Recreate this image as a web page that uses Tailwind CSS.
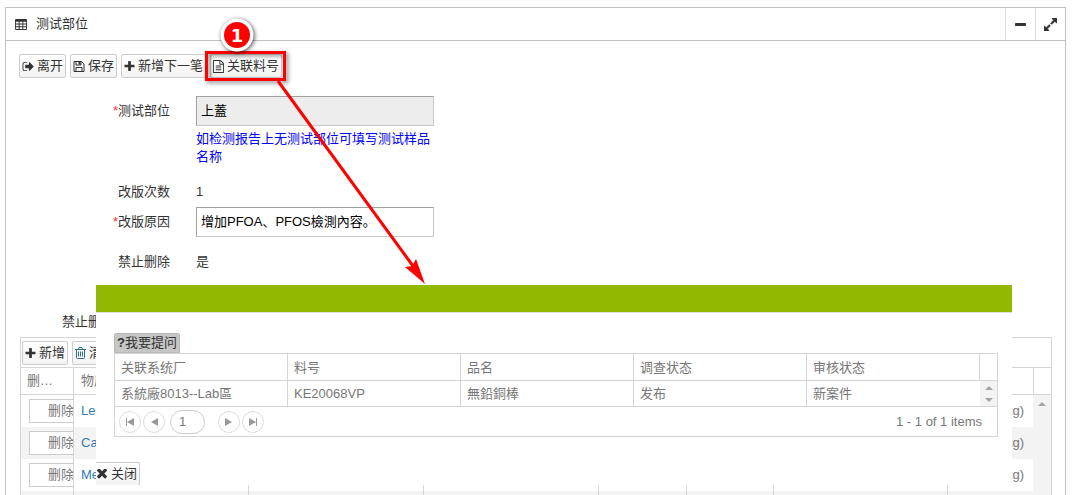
<!DOCTYPE html>
<html lang="zh-CN">
<head>
    <meta charset="UTF-8">
    <meta name="viewport" content="width=device-width, initial-scale=1.0">
    <title>测试部位</title>
    <script src="https://cdn.jsdelivr.net/npm/@tailwindcss/browser@4"></script>
</head>
<body class="bg-white font-['Liberation_Sans','Noto_Sans_CJK_SC',sans-serif] text-[13px] leading-[18px] text-[#333]">
    <!-- Icon set -->
    <svg class="hidden">
        <symbol id="i-table" viewBox="0 0 13 12"><path fill-rule="evenodd" d="M1 0h11q1 0 1 1v10q0 1-1 1H1q-1 0-1-1V1q0-1 1-1zM1 3v2h3V3zM5 3v2h3V3zM9 3v2h3V3zM1 6v2h3V6zM5 6v2h3V6zM9 6v2h3V6zM1 9v2h3V9zM5 9v2h3V9zM9 9v2h3V9z"/></symbol>
        <symbol id="i-exit" viewBox="0 128 1664 1536"><path d="M704 1440q0 4 1 20t.5 26.500-3 23.500-10 19.500-20.500 6.500h-320q-119 0-203.500-84.500t-84.500-203.500v-704q0-119 84.500-203.500t203.500-84.500h320q13 0 22.500 9.500t9.500 22.500q0 4 1 20t.5 26.500-3 23.500-10 19.500-20.500 6.500h-320q-66 0-113 47t-47 113v704q0 66 47 113t113 47h312l11.500 1 11.500 3 8 5.500 7 9 2 13.500zm928-544q0 26-19 45l-544 544q-19 19-45 19t-45-19-19-45v-288h-448q-26 0-45-19t-19-45v-384q0-26 19-45t45-19h448v-288q0-26 19-45t45-19 45 19l544 544q19 19 19 45z"/></symbol>
        <symbol id="i-save" viewBox="0 0 11 11"><path fill="none" stroke="currentColor" d="M.5 .5h7.500l2.500 2.500v7.500h-10zM2.500 10.500v-4h6v4M2.500 .5v3.500h5v-3.500"/><path d="M5 1h2v2.500H5z"/></symbol>
        <symbol id="i-plus" viewBox="192 128 1408 1408"><path d="M1600 736v192q0 40-28 68t-68 28h-416v416q0 40-28 68t-68 28h-192q-40 0-68-28t-28-68v-416h-416q-40 0-68-28t-28-68v-192q0-40 28-68t68-28h416v-416q0-40 28-68t68-28h192q40 0 68 28t28 68v416h416q40 0 68 28t28 68z"/></symbol>
        <symbol id="i-file" viewBox="128 0 1536 1792"><path d="M1596 380q28 28 48 76t20 88v1152q0 40-28 68t-68 28h-1344q-40 0-68-28t-28-68v-1600q0-40 28-68t68-28h896q40 0 88 20t76 48zm-444-244v376h376q-10-29-22-41l-313-313q-12-12-41-22zm384 1528v-1024h-416q-40 0-68-28t-28-68v-416h-768v1536h1280zm-1024-864q0-14 9-23t23-9h704q14 0 23 9t9 23v64q0 14-9 23t-23 9h-704q-14 0-23-9t-9-23v-64zm736 224q14 0 23 9t9 23v64q0 14-9 23t-23 9h-704q-14 0-23-9t-9-23v-64q0-14 9-23t23-9h704zm0 256q14 0 23 9t9 23v64q0 14-9 23t-23 9h-704q-14 0-23-9t-9-23v-64q0-14 9-23t23-9h704z"/></symbol>
        <symbol id="i-trash" viewBox="0 0 11 12"><path fill="none" stroke="currentColor" d="M0 2.500h11M3.500 2.500l.5-2h3l.5 2M1.500 2.500v8q0 1 1 1h6q1 0 1-1v-8M3.500 4.500v5M5.500 4.500v5M7.500 4.500v5"/></symbol>
        <symbol id="i-minus" viewBox="192 128 1408 1408"><path d="M1600 736v192q0 40-28 68t-68 28h-1216q-40 0-68-28t-28-68v-192q0-40 28-68t68-28h1216q40 0 68 28t28 68z"/></symbol>
        <symbol id="i-expand" viewBox="128 128 1536 1536"><path stroke="currentColor" stroke-width="60" d="M883 1056q0 13-10 23l-332 332 144 144q19 19 19 45t-19 45-45 19h-448q-26 0-45-19t-19-45v-448q0-26 19-45t45-19 45 19l144 144 332-332q10-10 23-10t23 10l114 114q10 10 10 23zm781-864v448q0 26-19 45t-45 19-45-19l-144-144-332 332q-10 10-23 10t-23-10l-114-114q-10-10-10-23t10-23l332-332-144-144q-19-19-19-45t19-45 45-19h448q26 0 45 19t19 45z"/></symbol>
        <symbol id="i-times" viewBox="302 434 1188 1188"><path d="M1490 1322q0 40-28 68l-136 136q-28 28-68 28t-68-28l-294-294-294 294q-28 28-68 28t-68-28l-136-136q-28-28-28-68t28-68l294-294-294-294q-28-28-28-68t28-68l136-136q28-28 68-28t68 28l294 294 294-294q28-28 68-28t68 28l136 136q28 28 28 68t-28 68l-294 294 294 294q28 28 28 68z"/></symbol>
    </svg>

    <div class="relative h-screen overflow-hidden pt-[7px] pr-1.5 pl-[5px]">
        <!-- Panel -->
        <main class="border border-[#c1c1c1]">
            <header class="flex h-[33px] items-center border-b border-[#c1c1c1] pl-[9px]">
                <svg class="h-[11px] w-3 fill-current"><use href="#i-table"/></svg>
                <h1 class="ml-[9px] flex-1">测试部位</h1>
                <button class="flex h-8 w-[30px] items-center justify-center border-l border-[#ddd]" aria-label="收起"><svg class="size-[11px] fill-current"><use href="#i-minus"/></svg></button>
                <button class="flex h-8 w-[30px] items-center justify-center border-l border-[#ddd]" aria-label="全屏"><svg class="size-[13px] fill-current"><use href="#i-expand"/></svg></button>
            </header>

            <!-- Toolbar -->
            <div class="flex gap-1 pt-[13px] pl-[13px]">
                <button class="flex h-6 items-center gap-[3px] rounded-xs border border-[#ccc] bg-linear-to-b from-white to-[#f3f3f3] px-[2px]"><svg class="h-[11px] w-3 fill-current"><use href="#i-exit"/></svg>离开</button>
                <button class="flex h-6 items-center gap-[3px] rounded-xs border border-[#ccc] bg-linear-to-b from-white to-[#f3f3f3] px-[2px]"><svg class="h-[11px] w-3 fill-current"><use href="#i-save"/></svg>保存</button>
                <button class="flex h-6 items-center gap-[3px] rounded-xs border border-[#ccc] bg-linear-to-b from-white to-[#f3f3f3] px-[2px]"><svg class="h-[10px] w-[11px] fill-current"><use href="#i-plus"/></svg>新增下一笔</button>
                <button class="flex h-6 items-center gap-[3px] rounded-xs border border-[#ccc] bg-linear-to-b from-white to-[#f3f3f3] px-[2px]"><svg class="h-[13px] w-[11px] fill-current"><use href="#i-file"/></svg>关联料号</button>
            </div>

            <!-- Form -->
            <form class="mt-[18px] grid grid-cols-[151px_238px] gap-x-[26px] pl-[13px]">
                <label for="part" class="text-right leading-[30px]"><span class="text-red-500">*</span>测试部位</label>
                <div class="h-[81px]">
                    <input id="part" type="text" value="上蓋" disabled class="h-[30px] w-full border border-[#c8c8c8] border-t-[#a0a0a0] border-l-[#a0a0a0] bg-[#ededed] px-1 pb-[3px] text-black">
                    <p class="mt-1 text-[#00f]">如检测报告上无测试部位可填写测试样品名称</p>
                </div>
                <span class="text-right leading-[30px]">改版次数</span>
                <span class="leading-[30px]">1</span>
                <label for="reason" class="text-right leading-[30px]"><span class="text-red-500">*</span>改版原因</label>
                <input id="reason" type="text" value="增加PFOA、PFOS檢測內容。" class="h-[30px] w-full border border-[#c8c8c8] border-t-[#a0a0a0] border-l-[#a0a0a0] px-1 pb-[3px] text-black">
                <span class="mt-[10px] text-right leading-[30px]">禁止删除</span>
                <span class="mt-[10px] leading-[30px]">是</span>
            </form>

            <!-- Substance grid -->
            <p class="mt-[30px] pl-14 leading-[30px]">禁止删除</p>
            <section class="mr-[13px] ml-[14px] border border-[#d5d5d5]">
                <div class="flex h-[29px] items-center gap-1 pl-px">
                    <button class="flex h-6 items-center gap-[3px] rounded-xs border border-[#ccc] bg-linear-to-b from-white to-[#f3f3f3] px-[2px]"><svg class="h-[10px] w-[11px] fill-current"><use href="#i-plus"/></svg>新增</button>
                    <button class="flex h-6 items-center gap-[3px] rounded-xs border border-[#ccc] bg-linear-to-b from-white to-[#f3f3f3] px-[2px]"><svg class="h-3 w-[11px] fill-current text-[#2e6d92]"><use href="#i-trash"/></svg>清空</button>
                </div>
                <div class="flex border-t border-[#d5d5d5]">
                    <div class="flex-1">
                        <table class="w-full table-fixed border-separate border-spacing-0 text-left text-[#777]">
                            <colgroup>
                                <col class="w-[52px]"><col class="w-[175px]"><col class="w-[175px]"><col class="w-[175px]"><col class="w-[88px]"><col class="w-[87px]"><col class="w-[174px]"><col>
                            </colgroup>
                            <thead>
                                <tr class="h-[27px] *:border-b *:border-l *:border-[#d5d5d5] *:px-[7px] *:font-normal *:first:border-l-0 *:first:px-[6px]">
                                    <th>删…</th><th>物质名称</th><th></th><th></th><th></th><th></th><th></th><th></th>
                                </tr>
                            </thead>
                            <tbody>
                                <tr class="h-8 *:border-l *:border-[#d5d5d5] *:first:border-l-0">
                                    <td class="overflow-hidden pl-2"><button class="block h-6 w-16 border border-[#ccc] bg-white text-center">删除</button></td>
                                    <td class="px-[7px]"><a href="#" class="text-[#337ab7]">Lead</a></td><td></td><td></td><td></td><td></td><td></td><td class="pr-[9px] text-right">(mg/kg)</td>
                                </tr>
                                <tr class="h-8 bg-[#f3f3f3] *:border-l *:border-[#d5d5d5] *:first:border-l-0">
                                    <td class="overflow-hidden pl-2"><button class="block h-6 w-16 border border-[#ccc] bg-white text-center">删除</button></td>
                                    <td class="px-[7px]"><a href="#" class="text-[#337ab7]">Cadmium</a></td><td></td><td></td><td></td><td></td><td></td><td class="pr-[9px] text-right">(mg/kg)</td>
                                </tr>
                                <tr class="h-8 *:border-l *:border-[#d5d5d5] *:first:border-l-0">
                                    <td class="overflow-hidden pl-2"><button class="block h-6 w-16 border border-[#ccc] bg-white text-center">删除</button></td>
                                    <td class="px-[7px]"><a href="#" class="text-[#337ab7]">Me</a></td><td></td><td></td><td></td><td></td><td></td><td class="pr-[9px] text-right">(mg/kg)</td>
                                </tr>
                                <tr class="h-8 bg-[#f3f3f3] *:border-l *:border-[#d5d5d5] *:first:border-l-0">
                                    <td></td><td></td><td></td><td></td><td></td><td></td><td></td><td></td>
                                </tr>
                            </tbody>
                        </table>
                    </div>
                    <div class="flex w-[18px] flex-col">
                        <div class="h-[27px] border-b border-l border-[#d5d5d5]"></div>
                        <div class="flex flex-1 justify-center bg-[#f3f3f3] pt-[7px]"><svg class="h-1 w-2 fill-[#a3a3a3]" viewBox="0 0 8 4"><path d="M4 0l4 4H0z"/></svg></div>
                    </div>
                </div>
            </section>
        </main>

        <!-- Related part numbers dialog -->
        <div role="dialog" class="absolute top-[285px] right-15 left-24 overflow-hidden bg-white text-[#777]">
            <div class="h-7 border-b border-[#ddd] bg-[#92b800]"></div>
            <div class="pt-5 pr-[14px] pl-[18px]">
                <button class="block h-5 rounded-t-xs border border-[#b8b8b8] bg-[#c6c6c6] px-[2px] text-[#333]"><b>?</b>我要提问</button>
                <div class="border border-[#d5d5d5]">
                    <table class="w-full table-fixed border-separate border-spacing-0 text-left">
                        <colgroup><col><col><col><col><col><col class="w-[17px]"></colgroup>
                        <thead>
                            <tr class="h-[27px] *:border-r *:border-b *:border-[#d5d5d5] *:px-[6px] *:pt-[2px] *:font-normal *:last:border-r-0">
                                <th>关联系统厂</th><th>料号</th><th>品名</th><th>调查状态</th><th>审核状态</th><th></th>
                            </tr>
                        </thead>
                        <tbody>
                            <tr class="h-[26px] *:border-b *:border-[#d5d5d5]">
                                <td class="border-r px-[6px]">系統廠8013--Lab區</td>
                                <td class="border-r px-[6px]">KE20068VP</td>
                                <td class="border-r px-[6px]">無鉛銅棒</td>
                                <td class="border-r px-[6px]">发布</td>
                                <td class="px-[6px]">新案件</td>
                                <td class="bg-[#f3f3f3]"><svg class="mx-auto h-4 w-2 fill-[#a3a3a3]" viewBox="0 0 8 16"><path d="M4 0l4 4H0zM4 16l4-4H0z"/></svg></td>
                            </tr>
                        </tbody>
                    </table>
                    <div class="flex h-[29px] items-center pl-1 *:shrink-0">
                        <button class="flex size-[22px] items-center justify-center rounded-full border border-[#ddd]" aria-label="首页"><svg class="h-2 w-2 fill-[#999]" viewBox="0 0 8 8"><path d="M0 0h1v8H0zM8 0v8L1 4z"/></svg></button>
                        <button class="ml-[2px] flex size-[22px] items-center justify-center rounded-full border border-[#ddd]" aria-label="上一页"><svg class="h-2 w-2 fill-[#999]" viewBox="0 0 8 8"><path d="M8 0v8L1 4z"/></svg></button>
                        <input type="text" value="1" aria-label="页码" class="ml-[5px] h-6 w-[35px] rounded-full border border-[#ccc] px-2">
                        <button class="ml-[13px] flex size-[22px] items-center justify-center rounded-full border border-[#ddd]" aria-label="下一页"><svg class="h-2 w-2 fill-[#999]" viewBox="0 0 8 8"><path d="M0 0v8l7-4z"/></svg></button>
                        <button class="ml-[2px] flex size-[22px] items-center justify-center rounded-full border border-[#ddd]" aria-label="末页"><svg class="h-2 w-2 fill-[#999]" viewBox="0 0 8 8"><path d="M7 0h1v8H7zM0 0v8l7-4z"/></svg></button>
                        <span class="ml-auto pr-[15px]">1 - 1 of 1 items</span>
                    </div>
                </div>
            </div>
            <button class="mt-[25px] flex h-[23px] items-center gap-1 rounded-tr-xs border-t border-r border-[#ccc] bg-linear-to-b from-white to-[#f3f3f3] pr-[2px] pl-px text-[#333]"><svg class="size-[10px] fill-current"><use href="#i-times"/></svg>关闭</button>
        </div>

        <!-- Step marker and arrow -->
        <svg class="pointer-events-none absolute top-0 left-0 h-[290px] w-[440px]">
            <g class="drop-shadow-[2px_2px_2px_rgba(0,0,0,0.5)]">
                <rect x="206.500" y="52.500" width="78" height="27" fill="none" stroke="#f00" stroke-width="3"/>
            </g>
            <path d="M278 81L413 266" stroke="#f00" stroke-width="3"/>
            <path d="M425 284l-20-17 7-1 4-7z" fill="#f00"/>
            <circle cx="237" cy="35" r="16.500" fill="#fff" class="drop-shadow-[1px_1px_2px_rgba(0,0,0,0.7)]"/>
            <circle cx="237" cy="35" r="13" fill="#f00"/>
            <text x="237" y="42" text-anchor="middle" fill="#fff" class="font-['DejaVu_Sans'] text-lg font-bold">1</text>
        </svg>
    </div>
</body>
</html>
